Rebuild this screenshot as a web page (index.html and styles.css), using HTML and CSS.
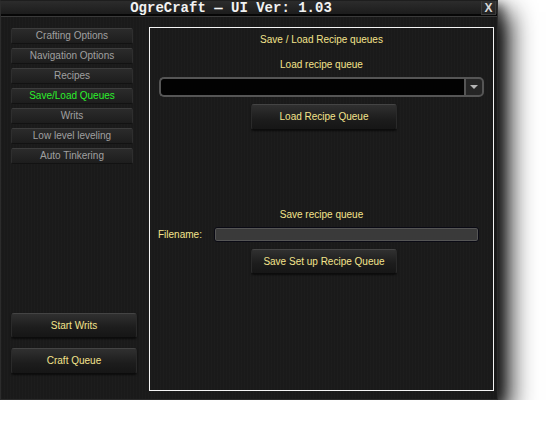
FILE: index.html
```html
<!DOCTYPE html>
<html lang="en">
<head>
    <meta charset="UTF-8">
    <meta name="viewport" content="width=device-width, initial-scale=1.0">
    <title>OgreCraft - UI Ver: 1.03</title>
    <link rel="stylesheet" href="styles.css">
</head>
<body>
    <div class="window">
        <div class="titlebar">
            <div class="title">OgreCraft — UI Ver: 1.03</div>
            <div class="close">X</div>
        </div>

        <div class="main">
            <div class="sidebar">
                <div class="nav">
                    <div class="nav-btn">Crafting Options</div>
                    <div class="nav-btn">Navigation Options</div>
                    <div class="nav-btn">Recipes</div>
                    <div class="nav-btn active">Save/Load Queues</div>
                    <div class="nav-btn">Writs</div>
                    <div class="nav-btn">Low level leveling</div>
                    <div class="nav-btn">Auto Tinkering</div>
                </div>
                <div class="actions">
                    <div class="btn big">Start Writs</div>
                    <div class="btn big">Craft Queue</div>
                </div>
            </div>

            <div class="panel">
                <div class="label heading">Save / Load Recipe queues</div>

                <div class="label load-label">Load recipe queue</div>
                <div class="dropdown">
                    <div class="dropdown-value"></div>
                    <div class="dropdown-arrow"><span class="tri"></span></div>
                </div>
                <div class="btn wide load-btn">Load Recipe Queue</div>

                <div class="label save-label">Save recipe queue</div>
                <div class="file-row">
                    <span class="file-label">Filename:</span>
                    <div class="file-input"></div>
                </div>
                <div class="btn wide save-btn">Save Set up Recipe Queue</div>
            </div>
        </div>
    </div>
</body>
</html>
```

FILE: styles.css
```css
body {
    margin: 0;
    background: #fff;
    font-family: "Liberation Sans", Arial, sans-serif;
    font-size: 10px;
}
.window {
    width: 498px;
    height: 400px;
    box-sizing: border-box;
    border: 1px solid #2c2c2c;
    border-top-color: #1e1e1e;
    background-color: #1a1a1a;
    background-image: repeating-linear-gradient(90deg, rgba(255,255,255,0.012) 0 1px, transparent 1px 3px);
    display: flex;
    flex-direction: column;
    box-shadow: 12px 12px 24px rgba(0, 0, 0, 0.9), 5px 5px 10px rgba(0, 0, 0, 0.5);
}
.titlebar {
    height: 13px;
    display: flex;
    align-items: flex-start;
    background: linear-gradient(#2c2c2c, #1c1c1c);
    border-bottom: 2px solid #060606;
    box-shadow: 0 1px 0 #3a3a3a;
}
.title {
    width: 460px;
    text-align: center;
    font-family: "Liberation Mono", "Courier New", monospace;
    font-weight: bold;
    font-size: 14px;
    line-height: 15px;
    color: #f2f2f2;
}
.close {
    margin-left: 20px;
    width: 15px;
    height: 14px;
    box-sizing: border-box;
    border: 1px solid #3c3c3c;
    border-top: none;
    background: linear-gradient(#333, #222);
    color: #d8d8d8;
    font-family: "Liberation Sans", sans-serif;
    font-weight: bold;
    font-size: 12px;
    line-height: 15px;
    text-align: center;
}
.main {
    flex: 1;
    display: flex;
    padding: 10px 0 8px 10px;
    margin-top: 1px;
}
.sidebar {
    width: 126px;
    display: flex;
    flex-direction: column;
    justify-content: space-between;
    padding: 1px 0 17px 0;
}
.nav-btn {
    width: 122px;
    height: 16px;
    box-sizing: border-box;
    margin-bottom: 4px;
    border: 1px solid #2e2e2e;
    border-top-color: #3d3d3d;
    border-bottom-color: #121212;
    border-radius: 2px;
    background: linear-gradient(#2b2b2b, #1d1d1d);
    color: #a0a0a0;
    text-align: center;
    line-height: 14px;
}
.nav-btn.active {
    color: #2cf02c;
}
.btn {
    box-sizing: border-box;
    border: 1px solid #2a2a2a;
    border-top-color: #444;
    border-bottom-color: #0c0c0c;
    border-radius: 3px;
    background: linear-gradient(#303030, #1c1c1c 60%, #161616);
    color: #f4e48c;
    text-align: center;
    box-shadow: 0 1px 2px rgba(0, 0, 0, 0.6);
}
.btn.big {
    width: 126px;
    height: 25px;
    line-height: 23px;
}
.actions .btn + .btn {
    margin-top: 10px;
    height: 26px;
    line-height: 24px;
}
.panel {
    margin-left: 12px;
    width: 345px;
    box-sizing: border-box;
    border: 1px solid #f4f4f4;
    display: flex;
    flex-direction: column;
}
.label {
    color: #f4e48c;
    text-align: center;
    line-height: 13px;
}
.heading {
    margin-top: 5px;
}
.load-label {
    margin-top: 12px;
}
.dropdown {
    margin: 6px 9px 0 9px;
    height: 20px;
    display: flex;
}
.dropdown-value {
    flex: 1;
    box-sizing: border-box;
    border: 2px solid #555;
    border-right: none;
    border-radius: 5px 0 0 5px;
    background: #020202;
}
.dropdown-arrow {
    width: 20px;
    box-sizing: border-box;
    border: 2px solid #555;
    border-radius: 0 5px 5px 0;
    background: #252525;
    display: flex;
    align-items: center;
    justify-content: center;
}
.tri {
    width: 0;
    height: 0;
    border-left: 4px solid transparent;
    border-right: 4px solid transparent;
    border-top: 4px solid #b4b4b4;
}
.btn.wide {
    width: 146px;
    margin-left: 101px;
    height: 26px;
    line-height: 24px;
}
.load-btn {
    margin-top: 7px;
}
.save-label {
    margin-top: 78px;
}
.file-row {
    margin: 6px 14px 0 8px;
    height: 15px;
    display: flex;
    align-items: center;
}
.file-label {
    width: 56px;
    color: #f4e48c;
}
.file-input {
    flex: 1;
    height: 15px;
    box-sizing: border-box;
    border: 1px solid #0a0a14;
    border-radius: 3px;
    background: #3a3a3a;
    box-shadow: inset 0 0 0 1px #555;
}
.save-btn {
    margin-top: 7px;
    height: 25px !important;
    line-height: 23px !important;
}
```
